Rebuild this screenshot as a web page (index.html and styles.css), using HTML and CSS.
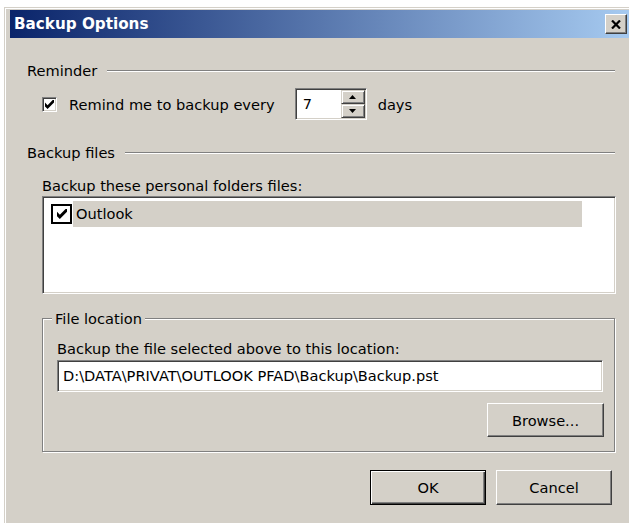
FILE: index.html
```html
<!DOCTYPE html>
<html lang="en">
<head>
<meta charset="utf-8">
<title>Backup Options</title>
<link rel="stylesheet" href="styles.css">
</head>
<body>
<div class="window">
  <div class="titlebar">
    <span class="title">Backup Options</span>
    <span class="close-btn">
      <svg width="10" height="9" viewBox="0 0 10 9"><path d="M1 0.5 L9 8.5 M9 0.5 L1 8.5" stroke="#000" stroke-width="2.2" fill="none"/></svg>
    </span>
  </div>
  <div class="panel">
    <div class="group-head"><span>Reminder</span></div>
    <div class="remind-row">
      <span class="check3d">
        <svg width="9" height="9" viewBox="0 0 7 7"><polygon points="0,2 2,4 7,-1 7,2 2,7 0,5" fill="#000"/></svg>
      </span>
      <span class="remind-text">Remind me to backup every</span>
      <span class="spin">
        <span class="spin-value">7</span>
        <span class="spin-btns">
          <span class="spin-btn"><svg width="7" height="4" viewBox="0 0 7 4"><polygon points="0,4 3.5,0 7,4" fill="#000"/></svg></span>
          <span class="spin-btn"><svg width="7" height="4" viewBox="0 0 7 4"><polygon points="0,0 3.5,4 7,0" fill="#000"/></svg></span>
        </span>
      </span>
      <span>days</span>
    </div>

    <div class="group-head second"><span>Backup files</span></div>
    <div class="indent">
      <div class="caption">Backup these personal folders files:</div>
      <div class="listbox">
        <div class="list-item">
          <span class="flat-check">
            <svg width="10" height="10" viewBox="0 0 7 7"><polygon points="0,2 2,4 7,-1 7,2 2,7 0,5" fill="#000"/></svg>
          </span>
          <span class="item-label">Outlook</span>
        </div>
      </div>

      <fieldset class="location">
        <legend>File location</legend>
        <div>Backup the file selected above to this location:</div>
        <div class="path-input">D:\DATA\PRIVAT\OUTLOOK PFAD\Backup\Backup.pst</div>
        <div class="browse-row"><span class="btn">Browse...</span></div>
      </fieldset>
    </div>

    <div class="actions">
      <span class="btn btn-small default">OK</span>
      <span class="btn btn-small">Cancel</span>
    </div>
  </div>
</div>
</body>
</html>
```
FILE: styles.css
```css
* { box-sizing: border-box; }

html, body {
  margin: 0;
  height: 100%;
}

body {
  background: #fff;
  font: 14.6px/17px "DejaVu Sans", "Liberation Sans", sans-serif;
  color: #000;
  overflow: hidden;
}

/* dialog frame */
.window {
  margin: 7px 0 0 4px;
  height: 516px;
  background: #d4d0c8;
  border-left: 1px solid #d4d0c8;
  border-top: 1px solid #d4d0c8;
  box-shadow: inset 1px 1px #fff;
  padding: 2px 0 0 5px;
}

.titlebar {
  height: 28px;
  display: flex;
  align-items: center;
  justify-content: space-between;
  padding: 0 2px 0 4px;
  background: linear-gradient(to right, #0a246a, #a6caf0);
}

.title {
  color: #fff;
  font-weight: bold;
  font-size: 15.2px;
}

.close-btn {
  width: 22px;
  height: 20px;
  display: flex;
  align-items: center;
  justify-content: center;
  background: #d4d0c8;
  border: 1px solid;
  border-color: #fff #404040 #404040 #fff;
  box-shadow: inset -1px -1px #808080;
}

.panel {
  padding: 24px 14px 0 17px;
}

/* section heading with etched rule */
.group-head {
  display: flex;
  align-items: center;
  gap: 10px;
}

.group-head::after {
  content: "";
  flex: 1;
  height: 0;
  border-top: 1px solid #808080;
  border-bottom: 1px solid #fff;
}

.group-head.second {
  margin-top: 24px;
}

.remind-row {
  display: flex;
  align-items: center;
  height: 32px;
  margin: 9px 0 0 15px;
}

.check3d {
  width: 15px;
  height: 15px;
  margin-right: 12px;
  display: flex;
  align-items: center;
  justify-content: center;
  background: #fff;
  border: 1px solid;
  border-color: #808080 #fff #fff #808080;
  box-shadow: inset 1px 1px #404040, inset -1px -1px #d4d0c8;
}

.remind-text {
  margin-right: 20px;
}

.spin {
  width: 72px;
  height: 32px;
  margin-right: 11px;
  display: flex;
  padding: 1px;
  background: #fff;
  border: 1px solid;
  border-color: #808080 #fff #fff #808080;
  box-shadow: inset 1px 1px #404040, inset -1px -1px #d4d0c8;
}

.spin-value {
  flex: 1;
  padding-left: 6px;
  line-height: 28px;
}

.spin-btns {
  width: 24px;
  display: flex;
  flex-direction: column;
}

.spin-btn {
  flex: 1;
  display: flex;
  align-items: center;
  justify-content: center;
  background: #d4d0c8;
  border: 1px solid;
  border-color: #d4d0c8 #404040 #404040 #d4d0c8;
  box-shadow: inset 1px 1px #fff, inset -1px -1px #808080;
}

.indent {
  margin-left: 15px;
}

.caption {
  margin-top: 16px;
}

.listbox {
  height: 98px;
  margin: 2px -1px 0 0;
  padding: 4px 0 0 8px;
  background: #fff;
  border: 1px solid;
  border-color: #808080 #fff #fff #808080;
  box-shadow: inset 1px 1px #404040, inset -1px -1px #d4d0c8;
}

.list-item {
  display: flex;
  align-items: center;
  height: 26px;
}

.flat-check {
  width: 21px;
  height: 20px;
  display: flex;
  align-items: center;
  justify-content: center;
  background: #fff;
  border: 2px solid #000;
}

.item-label {
  width: 509px;
  height: 26px;
  margin-left: 1px;
  padding-left: 3px;
  line-height: 26px;
  background: #d4d0c8;
}

/* etched group box */
.location {
  margin: 16px 0 0 0;
  padding: 13px 11px 14px 14px;
  min-width: 0;
  border: 1px solid #808080;
  box-shadow: inset 1px 1px #fff, 1px 1px #fff;
}

.location legend {
  margin-left: -5px;
  padding: 0 3px;
  background: #d4d0c8;
}

.path-input {
  height: 32px;
  margin-top: 3px;
  padding-left: 5px;
  line-height: 30px;
  white-space: nowrap;
  background: #fff;
  border: 1px solid;
  border-color: #808080 #fff #fff #808080;
  box-shadow: inset 1px 1px #404040, inset -1px -1px #d4d0c8;
}

.browse-row {
  display: flex;
  justify-content: flex-end;
  margin: 11px -1px 0 0;
}

.btn {
  width: 117px;
  height: 34px;
  display: flex;
  align-items: center;
  justify-content: center;
  background: #d4d0c8;
  border: 1px solid;
  border-color: #fff #404040 #404040 #fff;
  box-shadow: inset -1px -1px #808080;
}

.actions {
  display: flex;
  justify-content: flex-end;
  gap: 10px;
  margin: 18px 3px 0 0;
}

.btn-small {
  width: 116px;
  height: 35px;
}

.btn.default {
  border: 1px solid #000;
  box-shadow: inset 1px 1px #fff, inset -1px -1px #404040, inset -2px -2px #808080;
}
```
